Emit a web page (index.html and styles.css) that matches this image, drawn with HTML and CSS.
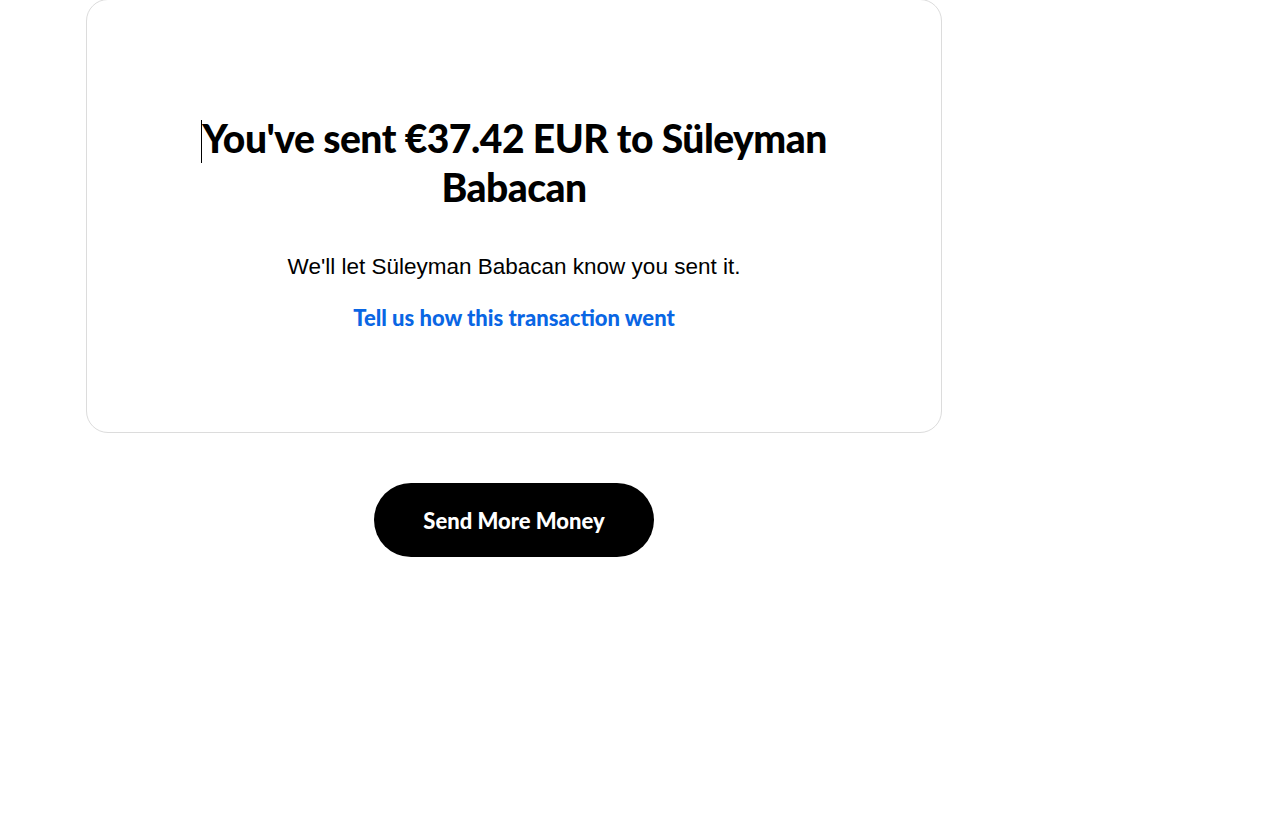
FILE: index.html
```html
<!DOCTYPE html>
<html lang="en">
<head>
<meta charset="utf-8">
<title>Payment sent</title>
<link rel="stylesheet" href="styles.css">
</head>
<body>
<main class="page">
  <section class="card">
    <h1 class="title"><span class="caret"></span>You've sent €37.42 EUR to Süleyman Babacan</h1>
    <p class="note">We'll let Süleyman Babacan know you sent it.</p>
    <a class="feedback" href="#">Tell us how this transaction went</a>
  </section>
  <div class="actions">
    <button class="primary" type="button">Send More Money</button>
  </div>
</main>
</body>
</html>
```

FILE: styles.css
```css
html, body {
  margin: 0;
  padding: 0;
  background: #ffffff;
}

body {
  font-family: "Liberation Sans", Arial, sans-serif;
  color: #000;
}

.page {
  width: 856px;
  margin-left: 86px;
  display: flex;
  flex-direction: column;
  align-items: center;
}

.card {
  box-sizing: border-box;
  width: 856px;
  height: 434px;
  margin-top: -1px;
  border: 1px solid #dcdcdc;
  border-radius: 22px;
  display: flex;
  flex-direction: column;
  align-items: center;
  padding-top: 114px;
}

.title {
  font-family: Lato, "Noto Sans", sans-serif;
  font-weight: 900;
  font-size: 39px;
  line-height: 48px;
  letter-spacing: -0.5px;
  text-align: center;
  max-width: 660px;
  margin: 0;
}

.caret {
  display: inline-block;
  width: 1px;
  height: 43px;
  background: #000;
  vertical-align: -10px;
}

.note {
  font-family: "Liberation Sans", Arial, sans-serif;
  font-size: 22.5px;
  line-height: 28px;
  margin: 42px 0 0;
}

.feedback {
  font-family: Lato, "Noto Sans", sans-serif;
  font-weight: 900;
  font-size: 22px;
  line-height: 28px;
  letter-spacing: 0;
  color: #0a66e4;
  text-decoration: none;
  margin-top: 23px;
}

.actions {
  margin-top: 50px;
}

.primary {
  width: 280px;
  height: 74px;
  border: 0;
  border-radius: 37px;
  background: #000;
  color: #fff;
  font-family: Lato, "Noto Sans", sans-serif;
  font-weight: 900;
  font-size: 22px;
  cursor: pointer;
}
```
